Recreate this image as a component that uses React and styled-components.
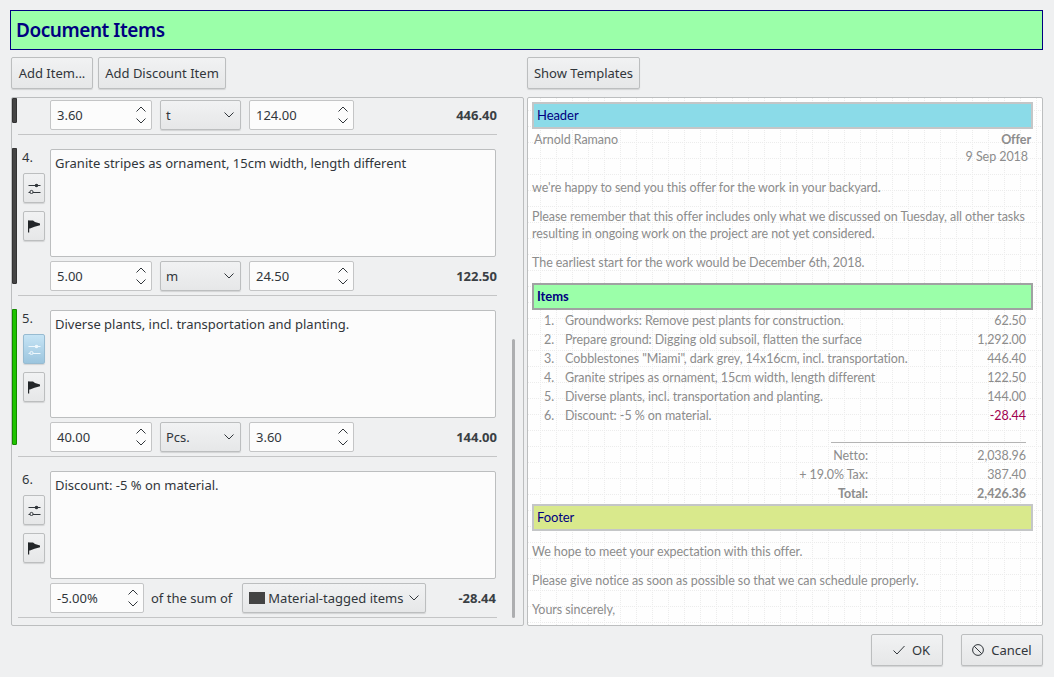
import React from "react";
import styled, { createGlobalStyle } from "styled-components";

const Global = createGlobalStyle`
  html, body { margin: 0; padding: 0; background: #eff0f1; }
  body { font-family: "Noto Sans", sans-serif; font-size: 13px; color: #31363b; }
  * { box-sizing: border-box; }
`;

const Page = styled.div`
  width: 1054px;
  height: 677px;
  padding: 10px 11px 11px 10px;
  display: flex;
  flex-direction: column;
  overflow: hidden;
`;
const Title = styled.div`
  height: 40px;
  flex: none;
  background: #9bffa9;
  border: 1px solid #000080;
  color: #000080;
  font-size: 19px;
  font-weight: 600;
  line-height: 38px;
  padding-left: 5px;
  letter-spacing: -0.45px;
`;
const Columns = styled.div`
  flex: 1;
  display: grid;
  grid-template-columns: 513px 516px;
  column-gap: 3px;
  margin-top: 7px;
  padding-left: 1px;
`;
const Column = styled.div`
  display: flex;
  flex-direction: column;
  min-width: 0;
`;
const Toolbar = styled.div`
  display: flex;
  gap: 5px;
  height: 33px;
  margin-bottom: 7px;
`;
const Button = styled.button`
  font: inherit;
  color: #31363b;
  width: ${(p) => p.$w}px;
  height: 32px;
  padding: 0;
  border: 1px solid #bcbebf;
  border-radius: 2px;
  background: linear-gradient(#f1f2f3, #e6e7e8);
  box-shadow: 0 1px 1px rgba(0,0,0,.12);
  display: inline-flex;
  align-items: center;
  justify-content: center;
  white-space: nowrap;
`;
const Panel = styled.div`
  height: 529px;
  border: 1px solid #bcbebf;
  border-radius: 2px;
  position: relative;
  overflow: hidden;
`;
const Divider = styled.div`
  height: 1px;
  background: #c4c5c6;
  margin: 0 26px 0 6px;
`;
const PartRow = styled.div`
  height: 36px;
  display: grid;
  grid-template-columns: 5px 1fr;
`;
const Stripe = styled.div`
  background: ${(p) => p.$color};
  border: 1px solid ${(p) => p.$edge};
  border-radius: 0 0 1px 1px;
  width: 5px;
  height: ${(p) => p.$h}px;
`;
const PartControls = styled.div`
  padding: 2px 0 0 33px;
`;
const ItemRow = styled.div`
  display: grid;
  grid-template-columns: 5px 33px 1fr;
  padding-top: 13px;
  height: 160px;
`;
const Side = styled.div`
  display: flex;
  flex-direction: column;
  padding-left: 5px;
`;
const Num = styled.div`
  line-height: 18px;
  margin-bottom: 7px;
  height: 18px;
`;
const Tool = styled.button`
  width: 22px;
  height: 30px;
  padding: 0;
  margin-left: 1px;
  margin-bottom: 8px;
  border: 1px solid ${(p) => (p.$active ? "#97bbd1" : "#bcbebf")};
  border-radius: 2px;
  background: ${(p) => (p.$active ? "linear-gradient(#c6e4f5, #9cc5de)" : "linear-gradient(#f1f2f3, #e6e7e8)")};
  box-shadow: 0 1px 1px rgba(0,0,0,.12);
  display: flex;
  align-items: center;
  justify-content: center;
`;
const Main = styled.div`
  display: flex;
  flex-direction: column;
  gap: 4px;
  padding-top: 1px;
`;
const TextBox = styled.div`
  width: 446px;
  height: 108px;
  background: #fcfcfc;
  border: 1px solid #bcbebf;
  border-radius: 2px;
  padding: 3px 4px;
  line-height: 20px;
  color: #31363b;
`;
const Controls = styled.div`
  display: flex;
  align-items: center;
  height: 30px;
  width: 447px;
`;
const SpinBox = styled.div`
  width: ${(p) => p.$w}px;
  height: 30px;
  flex: none;
  background: #fcfcfc;
  border: 1px solid #c4c5c6;
  border-radius: 2px;
  padding: 0 5px 0 6px;
  display: flex;
  align-items: center;
  justify-content: space-between;
`;
const Combo = styled.div`
  width: ${(p) => p.$w}px;
  height: 30px;
  flex: none;
  margin: ${(p) => p.$m || "0 8px"};
  padding: 0 6px 0 5px;
  border: 1px solid #bcbebf;
  border-radius: 2px;
  background: linear-gradient(#f1f2f3, #e6e7e8);
  box-shadow: 0 1px 1px rgba(0,0,0,.12);
  display: flex;
  align-items: center;
  justify-content: space-between;
`;
const ComboValue = styled.span`
  color: #31363b;
  display: inline-flex;
  align-items: center;
  gap: 3px;
`;
const Swatch = styled.span`
  width: 16px;
  height: 12px;
  margin-left: 1px;
  background: #444;
  display: inline-block;
`;
const Total = styled.b`
  margin-left: auto;
  margin-right: ${(p) => p.$mr || 0}px;
  font-weight: 700;
  color: #3a3f44;
`;
const Caption = styled.span`
  margin-left: 7px;
`;
const ScrollBar = styled.div`
  position: absolute;
  left: 500px;
  top: 241px;
  width: 3px;
  height: 279px;
  background: #adaeb0;
  border-radius: 2px;
`;

const Doc = styled(Panel)`
  background-color: #fefefe;
  background-image:
    conic-gradient(at 1px 1px, transparent 75%, #ececec 75%),
    conic-gradient(at 1px 1px, transparent 75%, #ececec 75%);
  background-size: 16px 2px, 2px 16px;
  background-position: 12px 0, 0 12px;
  padding: 4px 0 0 4px;
  font-family: "Lato", "Noto Sans", sans-serif;
  font-size: 12.5px;
  letter-spacing: -0.06px;
  color: #8c8c8c;
  line-height: 17px;
`;
const DocInner = styled.div`
  width: 501px;
`;
const Band = styled.div`
  height: 27px;
  margin-top: ${(p) => p.$mt || 0}px;
  background: ${(p) => p.$bg};
  border: 2px solid ${(p) => p.$edge};
  color: #000080;
  font-size: 13px;
  font-weight: ${(p) => (p.$bold ? 700 : 400)};
  line-height: 23px;
  padding-left: 3px;
`;
const HeadRow = styled.div`
  display: flex;
  justify-content: space-between;
  padding: 2px 0 0 2px;
`;
const HeadRight = styled.div`
  text-align: right;
  line-height: 17px;
  font-weight: ${(p) => (p.$bold ? 700 : 400)};
  margin-right: ${(p) => p.$mr || 0}px;
`;
const Para = styled.p`
  margin: ${(p) => p.$m || "12px 0 0"};
  white-space: nowrap;
  line-height: 17px;
`;
const Lines = styled.div`
  margin-top: 1px;
`;
const Line = styled.div`
  display: grid;
  grid-template-columns: 21px 1fr auto;
  padding: 0 7px 0 12px;
  height: 19px;
  line-height: 19px;
`;
const Amount = styled.span`
  color: ${(p) => p.$c || "inherit"};
`;
const Sums = styled.div`
  margin: 17px 7px 0 299px;
`;
const Rule = styled.div`
  border-top: 1px solid #b4b4b4;
  height: 1px;
  margin-bottom: 3px;
`;
const Sum = styled.div`
  display: flex;
  justify-content: space-between;
  height: 19px;
  line-height: 19px;
  font-weight: ${(p) => (p.$bold ? 700 : 400)};
`;
const SumLabel = styled.span`
  width: 37px;
  white-space: nowrap;
  display: flex;
  justify-content: flex-end;
`;

const Footer = styled.div`
  display: flex;
  justify-content: flex-end;
  gap: 18px;
  margin-top: 8px;
`;
const FootButton = styled(Button)`
  gap: 7px;
  padding-left: ${(p) => p.$pl || 0}px;
`;

const Arrows = () => (
  <svg width="10" height="20" viewBox="0 0 10 20" fill="none" stroke="#31363b" strokeWidth="1">
    <path d="M0.5 6.5 L5 2 L9.5 6.5" />
    <path d="M0.5 13.5 L5 18 L9.5 13.5" />
  </svg>
);
const Chevron = () => (
  <svg width="10" height="6" viewBox="0 0 10 6" fill="none" stroke="#31363b" strokeWidth="1">
    <path d="M0.5 0.5 L5 5 L9.5 0.5" />
  </svg>
);
const Sliders = ({ c = "#31363b", hole = "#eee" }) => (
  <svg width="13" height="11" viewBox="0 0 13 11" fill="none" stroke={c} strokeWidth="1">
    <path d="M0.5 2.5H12.5" />
    <circle cx="8.5" cy="2.5" r="1.8" fill={c} stroke="none" />
    <path d="M0.5 9.5H12.5" />
    <circle cx="3.5" cy="9" r="1.6" fill={hole} />
  </svg>
);
const Flag = () => (
  <svg width="12" height="13" viewBox="0 0 12 13" fill="#232629">
    <path d="M0 0.5H1.2V12.5H0Z" />
    <path d="M0.5 0.5 H5 L7 2 L12 3.5 V5.2 L6.5 6.8 L2 8.5 H0.5Z" />
  </svg>
);
const Check = () => (
  <svg width="12" height="10" viewBox="0 0 12 10" fill="none" stroke="#31363b" strokeWidth="1">
    <path d="M0.5 5.5 L4 9 L11.5 1" />
  </svg>
);
const Ban = () => (
  <svg width="12" height="12" viewBox="0 0 12 12" fill="none" stroke="#31363b" strokeWidth="1">
    <circle cx="6" cy="6" r="5.4" />
    <path d="M2.2 2.2 L9.8 9.8" />
  </svg>
);

const Spin = ({ w, v }) => (
  <SpinBox $w={w}>
    <span>{v}</span>
    <Arrows />
  </SpinBox>
);

const Item = ({ n, text, stripe, edge, active, children }) => (
  <>
    <ItemRow>
      {stripe ? <Stripe $color={stripe} $edge={edge} $h={136} /> : <span />}
      <Side>
        <Num>{n}.</Num>
        <Tool $active={active}>
          {active ? <Sliders c="#eef7fc" hole="#b5d7ec" /> : <Sliders />}
        </Tool>
        <Tool><Flag /></Tool>
      </Side>
      <Main>
        <TextBox>{text}</TextBox>
        <Controls>{children}</Controls>
      </Main>
    </ItemRow>
    <Divider />
  </>
);

export default function App() {
  return (
    <Page>
      <Global />
      <Title>Document Items</Title>
      <Columns>
        <Column>
          <Toolbar>
            <Button $w={82}>Add Item...</Button>
            <Button $w={128}>Add Discount Item</Button>
          </Toolbar>
          <Panel>
            <PartRow>
              <Stripe $color="#444" $edge="#333" $h={25} />
              <PartControls>
                <Controls>
                  <Spin w={102} v="3.60" />
                  <Combo $w={81}><ComboValue>t</ComboValue><Chevron /></Combo>
                  <Spin w={105} v="124.00" />
                  <Total>446.40</Total>
                </Controls>
              </PartControls>
            </PartRow>
            <Divider />
            <Item n={4} text="Granite stripes as ornament, 15cm width, length different" stripe="#444" edge="#333">
              <Spin w={102} v="5.00" />
              <Combo $w={81}><ComboValue>m</ComboValue><Chevron /></Combo>
              <Spin w={105} v="24.50" />
              <Total>122.50</Total>
            </Item>
            <Item n={5} text="Diverse plants, incl. transportation and planting." stripe="#1fc300" edge="#158a00" active>
              <Spin w={102} v="40.00" />
              <Combo $w={81}><ComboValue>Pcs.</ComboValue><Chevron /></Combo>
              <Spin w={105} v="3.60" />
              <Total>144.00</Total>
            </Item>
            <Item n={6} text="Discount: -5 % on material.">
              <Spin w={94} v="-5.00%" />
              <Caption>of the sum of</Caption>
              <Combo $w={184} $m="0 0 0 10px">
                <ComboValue><Swatch />Material-tagged items</ComboValue>
                <Chevron />
              </Combo>
              <Total $mr={1}>-28.44</Total>
            </Item>
            <ScrollBar />
          </Panel>
        </Column>
        <Column>
          <Toolbar>
            <Button $w={113}>Show Templates</Button>
          </Toolbar>
          <Doc>
            <DocInner>
              <Band $bg="#8bdbe8" $edge="#c4c6c7">Header</Band>
              <HeadRow>
                <span>Arnold Ramano</span>
                <div>
                  <HeadRight $bold $mr={2}>Offer</HeadRight>
                  <HeadRight $mr={5}>9 Sep 2018</HeadRight>
                </div>
              </HeadRow>
              <Para $m="14px 0 0">we're happy to send you this offer for the work in your backyard.</Para>
              <Para>Please remember that this offer includes only what we discussed on Tuesday, all other tasks<br />resulting in ongoing work on the project are not yet considered.</Para>
              <Para>The earliest start for the work would be December 6th, 2018.</Para>
              <Band $bg="#9bffa9" $edge="#a0a2a2" $bold $mt={12}>Items</Band>
              <Lines>
                <Line><span>1.</span><span>Groundworks: Remove pest plants for construction.</span><Amount>62.50</Amount></Line>
                <Line><span>2.</span><span>Prepare ground: Digging old subsoil, flatten the surface</span><Amount>1,292.00</Amount></Line>
                <Line><span>3.</span><span>Cobblestones "Miami", dark grey, 14x16cm, incl. transportation.</span><Amount>446.40</Amount></Line>
                <Line><span>4.</span><span>Granite stripes as ornament, 15cm width, length different</span><Amount>122.50</Amount></Line>
                <Line><span>5.</span><span>Diverse plants, incl. transportation and planting.</span><Amount>144.00</Amount></Line>
                <Line><span>6.</span><span>Discount: -5 % on material.</span><Amount $c="#a00050">-28.44</Amount></Line>
              </Lines>
              <Sums>
                <Rule />
                <Sum><SumLabel>Netto:</SumLabel><span>2,038.96</span></Sum>
                <Sum><SumLabel>+ 19.0% Tax:</SumLabel><span>387.40</span></Sum>
                <Sum $bold><SumLabel>Total:</SumLabel><span>2,426.36</span></Sum>
              </Sums>
              <Band $bg="#d9e98c" $edge="#c4c6c7" $mt={1}>Footer</Band>
              <Para>We hope to meet your expectation with this offer.</Para>
              <Para>Please give notice as soon as possible so that we can schedule properly.</Para>
              <Para>Yours sincerely,</Para>
            </DocInner>
          </Doc>
        </Column>
      </Columns>
      <Footer>
        <FootButton $w={72} $pl={9}><Check />OK</FootButton>
        <FootButton $w={82}><Ban />Cancel</FootButton>
      </Footer>
    </Page>
  );
}
